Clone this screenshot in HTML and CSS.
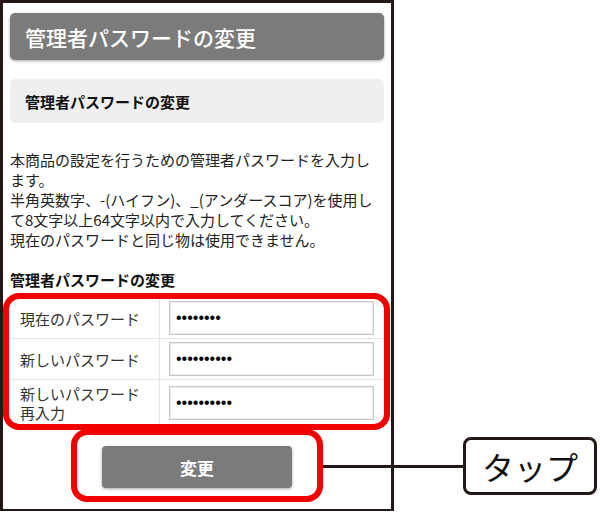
FILE: index.html
```html
<!DOCTYPE html>
<html lang="ja">
<head>
    <meta charset="UTF-8">
    <meta name="viewport" content="width=device-width, initial-scale=1.0">
    <title>管理者パスワードの変更</title>
    <link rel="stylesheet" href="styles.css">
</head>
<body>
    <div class="screen">
        <div class="phone">
            <h1 class="title-bar">管理者パスワードの変更</h1>
            <h2 class="section-bar">管理者パスワードの変更</h2>
            <p class="note">本商品の設定を行うための管理者パスワードを入力します。<br>半角英数字、-(ハイフン)、_(アンダースコア)を使用して8文字以上64文字以内で入力してください。<br>現在のパスワードと同じ物は使用できません。</p>
            <h3 class="field-title">管理者パスワードの変更</h3>
            <div class="pw-table">
                <div class="pw-row">
                    <label class="pw-label" for="current">現在のパスワード</label>
                    <div class="pw-cell"><input type="password" id="current" value="abcdefgh"></div>
                </div>
                <div class="pw-row">
                    <label class="pw-label" for="new">新しいパスワード</label>
                    <div class="pw-cell"><input type="password" id="new" value="abcdefghij"></div>
                </div>
                <div class="pw-row">
                    <label class="pw-label" for="confirm">新しいパスワード<br>再入力</label>
                    <div class="pw-cell"><input type="password" id="confirm" value="abcdefghij"></div>
                </div>
            </div>
            <div class="actions">
                <button type="button" class="change-btn">変更</button>
            </div>
        </div>

        <!-- annotation overlay -->
        <div class="mark mark-table"></div>
        <div class="mark mark-button"></div>
        <div class="leader"></div>
        <div class="callout">タップ</div>
    </div>
</body>
</html>
```

FILE: styles.css
```css
body {
    margin: 0;
    padding: 0;
    background-color: #fff;
    font-family: "Noto Sans CJK JP", "Noto Sans", sans-serif;
    color: #222;
}
.screen {
    position: relative;
    width: 600px;
    height: 520px;
    overflow: hidden;
}
.phone {
    width: 394px;
    height: 511px;
    box-sizing: border-box;
    border: 3px solid #231815;
    border-bottom-width: 2px;
    padding: 10px 7px 0 7px;
    background-color: #fff;
}
.title-bar {
    margin: 0;
    height: 47px;
    padding-left: 15px;
    display: flex;
    align-items: center;
    background-color: #7b7b7b;
    border-radius: 5px;
    box-shadow: 0 1px 3px rgba(0, 0, 0, 0.35);
    color: #fff;
    font-size: 21px;
    font-weight: 500;
}
.section-bar {
    margin: 19px 0 0;
    height: 44px;
    padding-left: 15px;
    display: flex;
    align-items: center;
    background-color: #efefef;
    border-radius: 5px;
    font-size: 15px;
    font-weight: bold;
    color: #111;
}
.note {
    margin: 27px 0 0;
    font-size: 15px;
    line-height: 20px;
    color: #222;
}
.field-title {
    margin: 20px 0 0;
    font-size: 15px;
    line-height: 20px;
    font-weight: bold;
    color: #111;
}
.pw-table {
    margin-top: 8px;
}
.pw-row {
    display: grid;
    grid-template-columns: 150px 1fr;
    border-bottom: 1px solid #e6e6e6;
}
.pw-label {
    display: flex;
    align-items: center;
    padding: 4px 10px;
    border-right: 1px solid #e6e6e6;
    font-size: 15px;
    line-height: 19px;
    color: #333;
}
.pw-cell {
    display: flex;
    align-items: center;
    padding: 3px 10px 3px 9px;
}
.pw-cell input {
    width: 100%;
    height: 34px;
    box-sizing: border-box;
    padding: 0 6px;
    border: 1px solid #c8c8c8;
    box-shadow: inset 0 0 0 1px #ececec;
    font-family: "Liberation Sans", sans-serif;
    font-size: 16px;
    color: #000;
}
.actions {
    display: flex;
    justify-content: center;
    margin-top: 19px;
}
.change-btn {
    width: 190px;
    height: 42px;
    border: none;
    border-radius: 4px;
    background-color: #7b7b7b;
    box-shadow: 0 1px 3px rgba(0, 0, 0, 0.35);
    color: #fff;
    font-family: "Noto Sans CJK JP", sans-serif;
    font-size: 17px;
    font-weight: bold;
}

/* red marks and the tap callout drawn over the screen */
.mark {
    position: absolute;
    box-sizing: border-box;
    border: 6px solid #f20000;
    border-radius: 16px;
}
.mark-table {
    left: 3px;
    top: 293px;
    width: 387px;
    height: 137px;
}
.mark-button {
    left: 71px;
    top: 429px;
    width: 252px;
    height: 73px;
}
.leader {
    position: absolute;
    left: 323px;
    top: 465px;
    width: 141px;
    height: 3px;
    background-color: #231815;
}
.callout {
    position: absolute;
    left: 463px;
    top: 437px;
    width: 134px;
    height: 58px;
    box-sizing: border-box;
    border: 3px solid #231815;
    border-radius: 8px;
    background-color: #fff;
    display: flex;
    align-items: center;
    justify-content: center;
    font-size: 32px;
    color: #111;
}
```
